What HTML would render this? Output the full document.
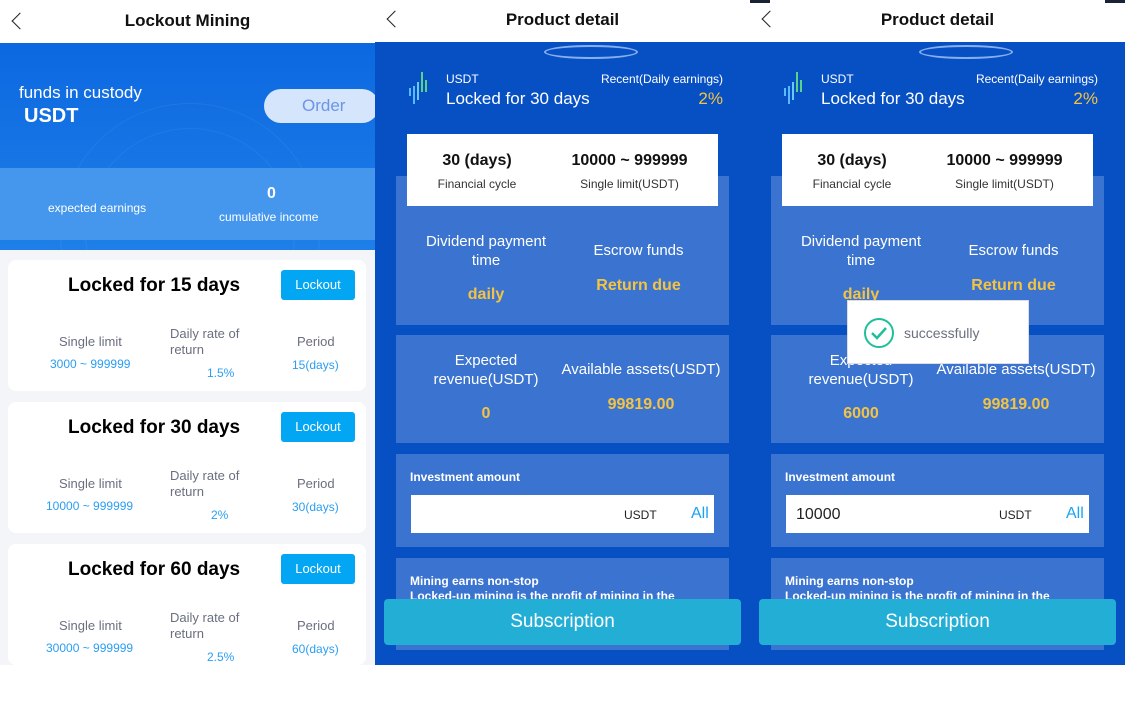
<!DOCTYPE html>
<html><head><meta charset="utf-8"><style>
*{margin:0;padding:0;box-sizing:border-box}
body{width:1125px;height:711px;background:#fff;font-family:"Liberation Sans",sans-serif;position:relative;overflow:hidden}
.a{position:absolute}
.hdr{height:42px;background:#fff;text-align:center;font-weight:bold;font-size:17px;line-height:40px;color:#111;position:relative}
.back{position:absolute;left:14px;top:13px;width:12px;height:12px;border-left:1.5px solid #222;border-bottom:1.5px solid #222;transform:rotate(45deg)}
.card{position:absolute;left:8px;width:358px;height:131px;background:#fff;border-radius:8px}
.card h3{position:absolute;left:60px;top:15px;font-size:19px;color:#000}
.btn{position:absolute;left:273px;top:10px;width:74px;height:30px;background:#03a6f3;color:#fff;border-radius:3px;font-size:13px;text-align:center;line-height:30px}
.lbl{position:absolute;font-size:13px;color:#6a6f80}
.val{position:absolute;font-size:12px;color:#2b9ef2}
.box{position:absolute;background:#3b74d0}
.w{color:#fff}
.y{color:#f5c342;font-weight:bold}
</style></head><body>
<!-- Panel 1 -->
<div class="a" style="left:0;top:0;width:375px;height:665px;background:#f4f5f9">
 <div class="hdr" style="height:43px;line-height:42px">Lockout Mining<div class="back" style="left:14px;top:15px"></div></div>
 <div class="a" style="left:0;top:43px;width:375px;height:207px;background:linear-gradient(#0c68e0,#1f7fe8);overflow:hidden">
  <div class="a" style="left:60px;top:60px;width:260px;height:260px;border:1px solid rgba(255,255,255,.06);border-radius:50%"></div>
  <div class="a" style="left:85px;top:85px;width:210px;height:210px;border:1px solid rgba(255,255,255,.06);border-radius:50%"></div>
  <div class="a w" style="left:19px;top:40px;font-size:17px">funds in custody</div>
  <div class="a w" style="left:24px;top:62px;font-size:20px;font-weight:bold">USDT</div>
  <div class="a" style="left:264px;top:46px;width:115px;height:34px;background:#d5e6fc;border-radius:17px;color:#6d95e6;font-size:17px;line-height:34px;padding-left:38px">Order</div>
  <div class="a" style="left:0;top:125px;width:375px;height:72px;background:#4597ee"></div>
  <div class="a w" style="left:48px;top:158px;font-size:12px">expected earnings</div>
  <div class="a w" style="left:267px;top:142px;font-size:16px;font-weight:bold">0</div>
  <div class="a w" style="left:219px;top:167px;font-size:12px">cumulative income</div>
 </div>
 <div class="card" style="top:260px"><h3>Locked for 15 days</h3><div class="btn">Lockout</div>
  <div class="lbl" style="left:51px;top:74px">Single limit</div><div class="val" style="left:42px;top:97px">3000 ~ 999999</div>
  <div class="lbl" style="left:162px;top:66px;width:80px;line-height:16px">Daily rate of return</div><div class="val" style="left:199px;top:106px">1.5%</div>
  <div class="lbl" style="left:289px;top:74px">Period</div><div class="val" style="left:284px;top:98px">15(days)</div></div>
 <div class="card" style="top:402px"><h3>Locked for 30 days</h3><div class="btn">Lockout</div>
  <div class="lbl" style="left:51px;top:74px">Single limit</div><div class="val" style="left:38px;top:97px">10000 ~ 999999</div>
  <div class="lbl" style="left:162px;top:66px;width:80px;line-height:16px">Daily rate of return</div><div class="val" style="left:203px;top:106px">2%</div>
  <div class="lbl" style="left:289px;top:74px">Period</div><div class="val" style="left:284px;top:98px">30(days)</div></div>
 <div class="card" style="top:544px;height:121px"><h3>Locked for 60 days</h3><div class="btn">Lockout</div>
  <div class="lbl" style="left:51px;top:74px">Single limit</div><div class="val" style="left:38px;top:97px">30000 ~ 999999</div>
  <div class="lbl" style="left:162px;top:66px;width:80px;line-height:16px">Daily rate of return</div><div class="val" style="left:199px;top:106px">2.5%</div>
  <div class="lbl" style="left:289px;top:74px">Period</div><div class="val" style="left:284px;top:98px">60(days)</div></div>
</div>

<div class="a" style="left:375px;top:0;width:375px;height:665px;background:#0750c4">
 <div class="hdr">Product detail<div class="back"></div></div>
 <div class="a" style="left:169px;top:45px;width:94px;height:14px;border:2px solid rgba(190,215,255,.7);border-radius:50%"></div>
 <svg class="a" style="left:33px;top:70px" width="22" height="38"><g stroke-width="2"><line x1="2" y1="18" x2="2" y2="26" stroke="#5ab8ff"/><line x1="6" y1="16" x2="6" y2="34" stroke="#5ab8ff"/><line x1="10" y1="12" x2="10" y2="30" stroke="#6ac8ff"/><line x1="14" y1="2" x2="14" y2="22" stroke="#5ad28a"/><line x1="18" y1="10" x2="18" y2="22" stroke="#5ad28a"/></g></svg>
 <div class="a w" style="left:71px;top:72px;font-size:12px">USDT</div>
 <div class="a w" style="left:71px;top:89px;font-size:17px">Locked for 30 days</div>
 <div class="a w" style="left:220px;top:72px;font-size:12px;width:128px;text-align:right">Recent(Daily earnings)</div>
 <div class="a" style="left:300px;top:89px;font-size:17px;width:48px;text-align:right;color:#f5c342">2%</div>
 <div class="box" style="left:21px;top:176px;width:333px;height:149px"></div>
 <div class="a" style="left:32px;top:134px;width:311px;height:72px;background:#fff">
  <div class="a" style="left:0;top:18px;width:140px;text-align:center;font-size:16px;font-weight:bold;color:#111">30 (days)</div>
  <div class="a" style="left:0;top:43px;width:140px;text-align:center;font-size:12px;color:#333">Financial cycle</div>
  <div class="a" style="left:150px;top:18px;width:145px;text-align:center;font-size:16px;font-weight:bold;color:#111">10000 ~ 999999</div>
  <div class="a" style="left:150px;top:43px;width:145px;text-align:center;font-size:12px;color:#333">Single limit(USDT)</div>
 </div>
 <div class="a w" style="left:40px;top:232px;width:142px;text-align:center;font-size:15px;line-height:19px">Dividend payment time</div>
 <div class="a y" style="left:40px;top:286px;width:142px;text-align:center;font-size:16px">daily</div>
 <div class="a w" style="left:192px;top:242px;width:143px;text-align:center;font-size:15px">Escrow funds</div>
 <div class="a y" style="left:192px;top:277px;width:143px;text-align:center;font-size:16px">Return due</div>
 <div class="box" style="left:21px;top:335px;width:333px;height:108px"></div>
 <div class="a w" style="left:30px;top:351px;width:162px;text-align:center;font-size:15px;line-height:19px">Expected revenue(USDT)</div>
 <div class="a y" style="left:30px;top:405px;width:162px;text-align:center;font-size:16px">0</div>
 <div class="a w" style="left:186px;top:361px;width:160px;text-align:center;font-size:15px">Available assets(USDT)</div>
 <div class="a y" style="left:186px;top:396px;width:160px;text-align:center;font-size:16px">99819.00</div>
 <div class="box" style="left:21px;top:454px;width:333px;height:93px"></div>
 <div class="a w" style="left:35px;top:470px;font-size:12px;font-weight:bold">Investment amount</div>
 <div class="a" style="left:36px;top:495px;width:303px;height:38px;background:#fff">
  <div class="a" style="left:213px;top:13px;font-size:12px;color:#222">USDT</div>
  <div class="a" style="left:280px;top:10px;font-size:16px;color:#1aa2f5">All</div>
 </div>
 <div class="box" style="left:21px;top:558px;width:333px;height:92px;overflow:hidden">
  <div class="a w" style="left:14px;top:16px;font-size:12px;font-weight:bold;line-height:15px;width:320px">Mining earns non-stop<br>Locked-up mining is the profit of mining in the</div>
 </div>
 <div class="a" style="left:9px;top:599px;width:357px;height:46px;background:#23aed6;border-radius:4px;color:#fff;font-size:19px;text-align:center;line-height:46px">Subscription</div>
</div>

<div class="a" style="left:750px;top:0;width:375px;height:665px;background:#0750c4">
 <div class="hdr">Product detail<div class="back"></div></div>
 <div class="a" style="left:0;top:0;width:20px;height:3px;background:#1a2236"></div>
 <div class="a" style="left:355px;top:0;width:20px;height:3px;background:#1a2236"></div>
 <div class="a" style="left:169px;top:45px;width:94px;height:14px;border:2px solid rgba(190,215,255,.7);border-radius:50%"></div>
 <svg class="a" style="left:33px;top:70px" width="22" height="38"><g stroke-width="2"><line x1="2" y1="18" x2="2" y2="26" stroke="#5ab8ff"/><line x1="6" y1="16" x2="6" y2="34" stroke="#5ab8ff"/><line x1="10" y1="12" x2="10" y2="30" stroke="#6ac8ff"/><line x1="14" y1="2" x2="14" y2="22" stroke="#5ad28a"/><line x1="18" y1="10" x2="18" y2="22" stroke="#5ad28a"/></g></svg>
 <div class="a w" style="left:71px;top:72px;font-size:12px">USDT</div>
 <div class="a w" style="left:71px;top:89px;font-size:17px">Locked for 30 days</div>
 <div class="a w" style="left:220px;top:72px;font-size:12px;width:128px;text-align:right">Recent(Daily earnings)</div>
 <div class="a" style="left:300px;top:89px;font-size:17px;width:48px;text-align:right;color:#f5c342">2%</div>
 <div class="box" style="left:21px;top:176px;width:333px;height:149px"></div>
 <div class="a" style="left:32px;top:134px;width:311px;height:72px;background:#fff">
  <div class="a" style="left:0;top:18px;width:140px;text-align:center;font-size:16px;font-weight:bold;color:#111">30 (days)</div>
  <div class="a" style="left:0;top:43px;width:140px;text-align:center;font-size:12px;color:#333">Financial cycle</div>
  <div class="a" style="left:150px;top:18px;width:145px;text-align:center;font-size:16px;font-weight:bold;color:#111">10000 ~ 999999</div>
  <div class="a" style="left:150px;top:43px;width:145px;text-align:center;font-size:12px;color:#333">Single limit(USDT)</div>
 </div>
 <div class="a w" style="left:40px;top:232px;width:142px;text-align:center;font-size:15px;line-height:19px">Dividend payment time</div>
 <div class="a y" style="left:40px;top:286px;width:142px;text-align:center;font-size:16px">daily</div>
 <div class="a w" style="left:192px;top:242px;width:143px;text-align:center;font-size:15px">Escrow funds</div>
 <div class="a y" style="left:192px;top:277px;width:143px;text-align:center;font-size:16px">Return due</div>
 <div class="box" style="left:21px;top:335px;width:333px;height:108px"></div>
 <div class="a w" style="left:30px;top:351px;width:162px;text-align:center;font-size:15px;line-height:19px">Expected revenue(USDT)</div>
 <div class="a y" style="left:30px;top:405px;width:162px;text-align:center;font-size:16px">6000</div>
 <div class="a w" style="left:186px;top:361px;width:160px;text-align:center;font-size:15px">Available assets(USDT)</div>
 <div class="a y" style="left:186px;top:396px;width:160px;text-align:center;font-size:16px">99819.00</div>
 <div class="box" style="left:21px;top:454px;width:333px;height:93px"></div>
 <div class="a w" style="left:35px;top:470px;font-size:12px;font-weight:bold">Investment amount</div>
 <div class="a" style="left:36px;top:495px;width:303px;height:38px;background:#fff">
  <div class="a" style="left:10px;top:11px;font-size:16px;color:#222">10000</div>
  <div class="a" style="left:213px;top:13px;font-size:12px;color:#222">USDT</div>
  <div class="a" style="left:280px;top:10px;font-size:16px;color:#1aa2f5">All</div>
 </div>
 <div class="box" style="left:21px;top:558px;width:333px;height:92px;overflow:hidden">
  <div class="a w" style="left:14px;top:16px;font-size:12px;font-weight:bold;line-height:15px;width:320px">Mining earns non-stop<br>Locked-up mining is the profit of mining in the</div>
 </div>
 <div class="a" style="left:9px;top:599px;width:357px;height:46px;background:#23aed6;border-radius:4px;color:#fff;font-size:19px;text-align:center;line-height:46px">Subscription</div>
 <div class="a" style="left:97px;top:300px;width:182px;height:64px;background:#fff;border:1px solid #ddd">
  <svg class="a" style="left:15px;top:16px" width="32" height="32"><circle cx="16" cy="16" r="14" fill="none" stroke="#1fbf9a" stroke-width="2"/><path d="M9 16l5 5 9-10" fill="none" stroke="#1fbf9a" stroke-width="2.5"/></svg>
  <div class="a" style="left:56px;top:24px;font-size:14px;color:#6a7080">successfully</div>
 </div>
</div>
</body></html>
